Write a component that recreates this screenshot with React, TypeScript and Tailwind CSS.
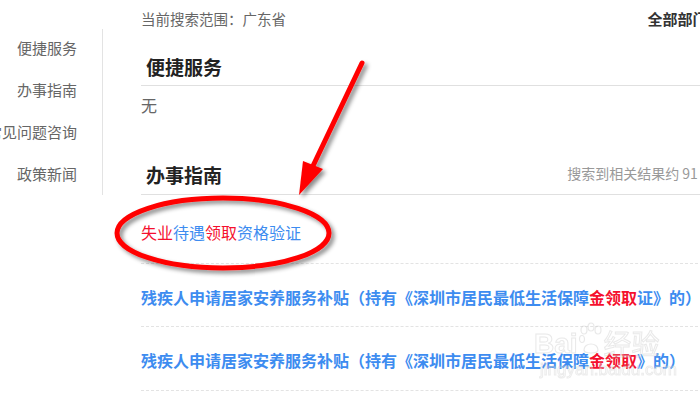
import React from 'react'

const FONT = { fontFamily: '"Noto Sans CJK SC", "Noto Sans", sans-serif' }

const SIDE_ITEMS = ['便捷服务', '办事指南', '常见问题咨询', '政策新闻']

function Hl({ children }: { children: React.ReactNode }) {
  return <span className="text-[#f5102e]">{children}</span>
}

function Annotation() {
  return (
    <svg className="absolute left-0 top-0 pointer-events-none" width="700" height="400" viewBox="0 0 700 400">
      <defs>
        <filter id="sh" x="-20%" y="-20%" width="140%" height="140%">
          <feDropShadow dx="3" dy="3" stdDeviation="2" floodColor="#000" floodOpacity="0.45" />
        </filter>
      </defs>
      <g filter="url(#sh)">
        <ellipse cx="223" cy="233" rx="106" ry="35" fill="none" stroke="#f00" strokeWidth="5" />
        <line x1="362" y1="63" x2="312" y2="168" stroke="#f00" strokeWidth="5" strokeLinecap="round" />
        <polygon points="303,161 323,169 299,195" fill="#f00" />
      </g>
    </svg>
  )
}

function Watermark() {
  return (
    <div className="absolute left-[534px] top-[322px] pointer-events-none select-none opacity-40" style={FONT}>
      <div className="flex items-end">
        <span className="text-[28px] leading-[28px] font-bold text-white [-webkit-text-stroke:1px_#c8c8c8]" style={{ fontFamily: '"Liberation Sans", sans-serif' }}>Bai</span>
        <svg width="26" height="34" viewBox="0 0 26 34" className="mb-[2px]">
          <g fill="none" stroke="#c8c8c8" strokeWidth="1.2">
            <ellipse cx="6" cy="8" rx="3" ry="4" />
            <ellipse cx="13" cy="5" rx="3" ry="4" />
            <ellipse cx="20" cy="8" rx="3" ry="4" />
            <ellipse cx="4" cy="17" rx="2.5" ry="3.5" />
            <path d="M6 28 C6 20 20 20 20 28 C20 32 6 32 6 28 Z" />
          </g>
        </svg>
        <span className="text-[28px] leading-[30px] text-white [-webkit-text-stroke:1px_#c8c8c8]">经验</span>
      </div>
      <div className="text-[17px] leading-[20px] text-white [-webkit-text-stroke:1px_#cfcfcf] ml-[6px] mt-[2px]" style={{ fontFamily: '"Liberation Sans", sans-serif' }}>
        jingyan.baidu.com
      </div>
    </div>
  )
}

export default function App() {
  return (
    <div className="relative w-[700px] h-[400px] overflow-hidden bg-white" style={FONT}>
      <div className="flex">
        {/* Sidebar */}
        <div className="w-[103px] shrink-0 mt-[29px] h-[166px] border-r border-[#e3e3e3]">
          <div className="flex flex-col items-end pr-[25px] pt-[11px] gap-[26px]">
            {SIDE_ITEMS.map(s => (
              <div key={s} className="text-[15px] leading-[16px] text-[#666] whitespace-nowrap">{s}</div>
            ))}
          </div>
        </div>

        {/* Main */}
        <div className="w-[610px] shrink-0 pl-[38px]">
          <div className="h-[38px] flex items-center justify-between">
            <span className="text-[14.5px] text-[#666]">当前搜索范围：广东省</span>
            <span className="-mr-[6px] text-[15px] font-bold text-[#333] whitespace-nowrap">全部部门 ▾</span>
          </div>

          <div className="h-[48px] border-b border-[#e0e0e0] pt-[17px] flex items-start">
            <span className="pl-[5px] text-[19px] leading-[24px] font-bold text-[#222]">便捷服务</span>
            <span className="ml-auto -mr-[130px] text-[14px] leading-[24px] text-[#999] whitespace-nowrap">搜索到相关结果约 0 条</span>
          </div>
          <div className="h-[40px] pt-[9px] text-[16px] leading-[20px] text-[#666]">无</div>

          <div className="h-[69px] border-b border-[#e0e0e0] pt-[37px] flex items-start">
            <span className="pl-[5px] text-[19px] leading-[24px] font-bold text-[#222]">办事指南</span>
            <span className="ml-auto -mr-[2px] text-[14px] leading-[20px] text-[#999] whitespace-nowrap">搜索到相关结果约 91 条</span>
          </div>

          <div className="h-[69px] border-b border-dashed border-[#e3e3e3] pt-[25px] text-[16px] leading-[24px] text-[#3d8cf0] whitespace-nowrap">
            <Hl>失业</Hl>待遇<Hl>领取</Hl>资格验证
          </div>
          <div className="h-[63px] border-b border-dashed border-[#e3e3e3] pt-[21px] text-[16px] leading-[24px] font-bold text-[#3d8cf0] whitespace-nowrap">
            残疾人申请居家安养服务补贴（持有《深圳市居民最低生活保障<Hl>金领取</Hl>证》的）
          </div>
          <div className="h-[64px] border-b border-dashed border-[#e3e3e3] pt-[21px] text-[16px] leading-[24px] font-bold text-[#3d8cf0] whitespace-nowrap">
            残疾人申请居家安养服务补贴（持有《深圳市居民最低生活保障<Hl>金领取</Hl>》的）
          </div>
        </div>
      </div>

      <Annotation />
      <Watermark />
    </div>
  )
}
